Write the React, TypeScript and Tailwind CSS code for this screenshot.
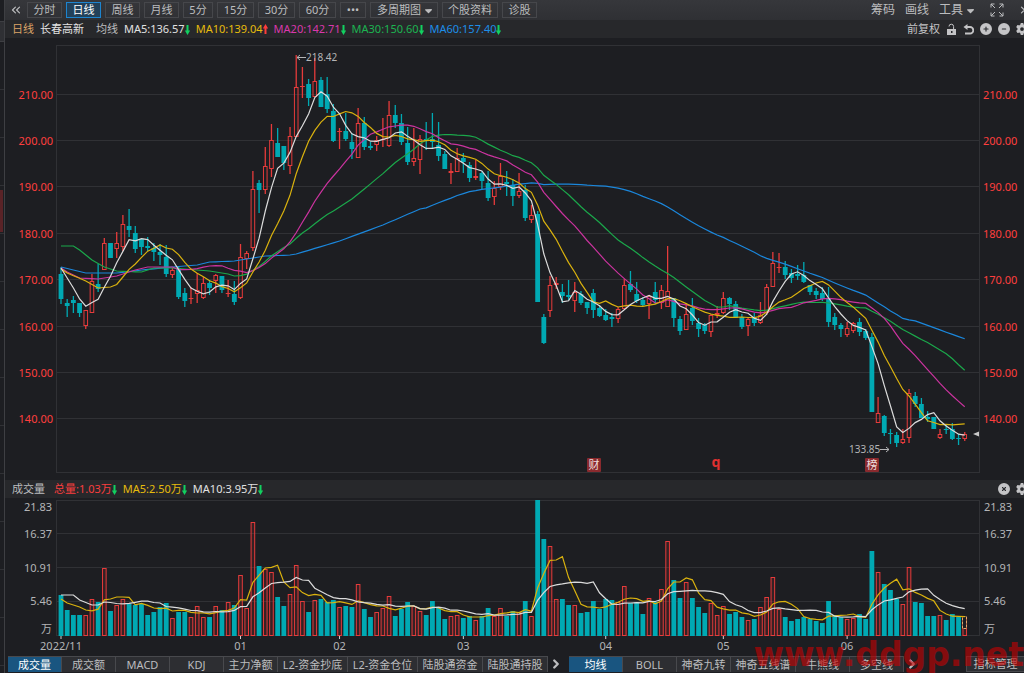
import { useState } from 'react';
import { ChevronRight, ChevronsLeft, ChevronsRight } from 'lucide-react';
import { FaCaretDown, FaCircleMinus, FaCirclePlus, FaCircleXmark, FaGear } from 'react-icons/fa6';

type Direction = 'u' | 'd';
// direction, high, low, body top, body bottom, volume top (chart units, y grows downwards)
type Candle = [Direction, number, number, number, number, number];
type Knot = [number, number];

const CANDLES: Candle[] = [
  ['d', 267, 304, 274, 299, 595],
  ['d', 299, 317, 303, 306, 610],
  ['d', 296, 313, 300, 303, 615],
  ['d', 303, 317, 303, 313, 615],
  ['u', 310, 329, 310, 326, 615],
  ['u', 274, 313, 281, 313, 599],
  ['d', 264, 292, 284, 289, 602],
  ['u', 238, 270, 243, 270, 568],
  ['d', 243, 258, 243, 258, 611],
  ['u', 232, 258, 243, 249, 605],
  ['u', 215, 251, 224, 247, 599],
  ['d', 209, 237, 226, 230, 604],
  ['d', 226, 253, 233, 249, 605],
  ['d', 239, 255, 239, 247, 604],
  ['d', 237, 251, 246, 248, 615],
  ['d', 243, 261, 248, 252, 612],
  ['d', 244, 265, 252, 255, 607],
  ['d', 245, 277, 257, 274, 603],
  ['u', 268, 278, 270, 275, 618],
  ['d', 266, 299, 268, 297, 612],
  ['d', 288, 307, 293, 301, 612],
  ['u', 287, 304, 298, 299, 617],
  ['u', 273, 303, 290, 294, 606],
  ['u', 277, 299, 283, 298, 617],
  ['d', 280, 295, 283, 288, 617],
  ['u', 274, 293, 275, 281, 606],
  ['d', 276, 293, 276, 290, 610],
  ['u', 280, 297, 293, 294, 602],
  ['d', 281, 305, 294, 302, 605],
  ['u', 244, 299, 257, 298, 575],
  ['u', 251, 269, 253, 259, 608],
  ['u', 171, 251, 189, 248, 522],
  ['d', 180, 213, 183, 190, 566],
  ['u', 147, 194, 166, 190, 569],
  ['u', 124, 177, 140, 169, 572],
  ['d', 128, 157, 143, 157, 597],
  ['d', 146, 170, 146, 163, 606],
  ['u', 127, 174, 136, 166, 594],
  ['u', 55, 137, 87, 137, 565],
  ['u', 67, 98, 86, 87, 601],
  ['d', 79, 106, 84, 98, 612],
  ['u', 58, 97, 81, 97, 600],
  ['d', 77, 107, 80, 107, 599],
  ['d', 77, 113, 94, 109, 602],
  ['d', 104, 142, 111, 141, 600],
  ['u', 128, 149, 131, 132, 607],
  ['d', 113, 141, 131, 139, 606],
  ['d', 133, 159, 142, 149, 607],
  ['u', 108, 158, 123, 158, 584],
  ['d', 117, 150, 123, 147, 609],
  ['d', 142, 150, 146, 148, 617],
  ['u', 136, 151, 140, 145, 612],
  ['u', 118, 147, 139, 140, 608],
  ['u', 101, 147, 115, 146, 596],
  ['d', 105, 128, 115, 123, 616],
  ['d', 114, 145, 123, 142, 609],
  ['d', 127, 165, 143, 162, 602],
  ['u', 128, 166, 158, 162, 606],
  ['u', 135, 174, 139, 160, 611],
  ['d', 122, 150, 139, 141, 615],
  ['d', 113, 149, 139, 142, 601],
  ['d', 122, 161, 145, 156, 607],
  ['d', 151, 169, 154, 169, 619],
  ['u', 163, 184, 171, 173, 616],
  ['u', 148, 172, 158, 172, 615],
  ['d', 153, 173, 158, 162, 618],
  ['d', 162, 182, 165, 178, 616],
  ['u', 160, 180, 176, 178, 620],
  ['d', 171, 189, 173, 181, 616],
  ['d', 171, 201, 183, 198, 608],
  ['u', 181, 205, 188, 197, 616],
  ['u', 163, 190, 176, 187, 608],
  ['d', 171, 196, 182, 184, 616],
  ['d', 179, 206, 185, 196, 611],
  ['u', 173, 198, 191, 196, 612],
  ['d', 185, 221, 190, 218, 601],
  ['u', 205, 223, 215, 220, 616],
  ['d', 211, 302, 214, 302, 500],
  ['d', 314, 344, 317, 343, 539],
  ['u', 276, 317, 285, 311, 546],
  ['u', 277, 289, 283, 285, 599],
  ['d', 284, 303, 292, 296, 599],
  ['d', 280, 300, 295, 297, 605],
  ['u', 282, 312, 292, 301, 605],
  ['d', 291, 305, 294, 303, 613],
  ['d', 302, 314, 302, 308, 612],
  ['d', 289, 318, 293, 310, 601],
  ['d', 305, 317, 308, 316, 609],
  ['d', 309, 321, 315, 320, 599],
  ['d', 313, 327, 317, 319, 600],
  ['u', 307, 323, 309, 319, 602],
  ['u', 279, 309, 285, 309, 586],
  ['d', 271, 292, 284, 290, 603],
  ['d', 282, 303, 294, 301, 602],
  ['d', 297, 306, 300, 305, 614],
  ['u', 295, 319, 296, 304, 598],
  ['d', 282, 304, 292, 300, 602],
  ['u', 285, 309, 290, 303, 589],
  ['u', 246, 307, 291, 307, 541],
  ['d', 298, 327, 298, 318, 580],
  ['d', 316, 335, 319, 331, 598],
  ['u', 303, 330, 314, 330, 582],
  ['d', 298, 325, 308, 321, 598],
  ['d', 318, 337, 323, 329, 607],
  ['d', 323, 334, 325, 331, 613],
  ['u', 314, 337, 315, 332, 603],
  ['u', 306, 318, 313, 315, 615],
  ['u', 292, 314, 298, 313, 606],
  ['d', 297, 310, 298, 304, 614],
  ['d', 301, 318, 304, 318, 612],
  ['d', 314, 329, 317, 327, 617],
  ['u', 317, 336, 319, 326, 620],
  ['d', 313, 326, 318, 323, 619],
  ['u', 302, 324, 315, 323, 607],
  ['u', 284, 315, 287, 313, 597],
  ['u', 252, 287, 263, 287, 577],
  ['u', 253, 273, 267, 268, 609],
  ['d', 261, 279, 267, 275, 617],
  ['d', 269, 283, 273, 278, 621],
  ['d', 265, 280, 274, 276, 619],
  ['d', 262, 283, 275, 282, 617],
  ['d', 285, 295, 285, 292, 619],
  ['d', 288, 299, 291, 295, 621],
  ['d', 287, 301, 293, 299, 623],
  ['d', 287, 327, 298, 322, 601],
  ['d', 313, 330, 317, 325, 615],
  ['d', 323, 337, 325, 329, 617],
  ['u', 322, 337, 328, 335, 619],
  ['u', 322, 333, 323, 331, 618],
  ['d', 318, 336, 322, 332, 614],
  ['d', 329, 340, 331, 338, 619],
  ['d', 333, 412, 337, 412, 551],
  ['u', 397, 423, 413, 423, 572],
  ['d', 415, 436, 416, 433, 584],
  ['d', 429, 444, 433, 434, 590],
  ['d', 432, 447, 435, 443, 599],
  ['u', 429, 444, 439, 443, 604],
  ['u', 389, 443, 393, 438, 567],
  ['d', 392, 407, 396, 404, 602],
  ['d', 398, 418, 404, 418, 603],
  ['d', 411, 422, 417, 419, 616],
  ['d', 417, 429, 417, 429, 616],
  ['u', 429, 439, 434, 438, 615],
  ['d', 425, 434, 429, 430, 620],
  ['d', 423, 440, 429, 439, 614],
  ['d', 434, 445, 438, 439, 617],
  ['u', 432, 441, 434, 439, 617],
];

const UP = '#e63b3b';
const DOWN = '#00a9b3';
const GRID = '#303135';
const WHITE = '#dcdcdc';
const YELLOW = '#dab20e';
const VOLUME_BASE = 635;

const closes = CANDLES.map(([dir, , , top, bottom]) => (dir === 'u' ? top : bottom));
const volumes = CANDLES.map((c) => c[5]);

const xAt = (i: number) => 61 + i * 6.19;

// The first values of an average depend on days before the window, so they come from knots.
function fromKnots(knots: Knot[], i: number) {
  const next = knots.findIndex(([k]) => k >= i);
  if (next <= 0) return knots[0][1];
  const [x0, y0] = knots[next - 1];
  const [x1, y1] = knots[next];
  return y0 + ((y1 - y0) * (i - x0)) / (x1 - x0);
}

function averageLine(values: number[], span: number, knots: Knot[]) {
  return values
    .map((_, i) => {
      const y =
        i < span - 1
          ? fromKnots(knots, i)
          : values.slice(i - span + 1, i + 1).reduce((a, b) => a + b, 0) / span;
      return `${xAt(i).toFixed(1)},${y.toFixed(1)}`;
    })
    .join(' ');
}

const PRICE_LINES = [
  {
    color: '#1b87dc',
    points: averageLine(closes, 60, [
      [0, 267], [2, 270], [4, 273], [9, 273], [13, 270], [18, 267], [22, 265], [24, 262], [28, 261],
      [31, 258], [33, 256], [37, 255], [38, 254], [45, 241], [52, 225], [58, 209], [59, 207],
    ]),
  },
  {
    color: '#1ba84b',
    points: averageLine(closes, 30, [
      [0, 246], [2, 246], [3, 250], [5, 260], [7, 267], [9, 271], [13, 272], [15, 268], [18, 268],
      [24, 271], [27, 274], [28, 276], [29, 275],
    ]),
  },
  {
    color: '#cb339f',
    points: averageLine(closes, 20, [
      [0, 268], [1, 272], [3, 278], [6, 279], [9, 276], [12, 270], [14, 267], [18, 267], [19, 268],
    ]),
  },
  {
    color: YELLOW,
    points: averageLine(closes, 10, [[0, 269], [1, 273], [4, 281], [6, 288], [8, 287], [9, 284]]),
  },
  { color: WHITE, points: averageLine(closes, 5, [[0, 268], [2, 288], [3, 299], [4, 306]]) },
];

const VOLUME_LINES = [
  { color: YELLOW, points: averageLine(volumes, 5, [[0, 599], [1, 603], [3, 607], [4, 610]]) },
  {
    color: WHITE,
    points: averageLine(volumes, 10, [[0, 595], [2, 595], [3, 600], [5, 605], [6, 605], [7, 602], [9, 603]]),
  },
];

const PRICE_TICKS = [
  { y: 95, label: '210.00' },
  { y: 141, label: '200.00' },
  { y: 187, label: '190.00' },
  { y: 234, label: '180.00' },
  { y: 280, label: '170.00' },
  { y: 327, label: '160.00' },
  { y: 373, label: '150.00' },
  { y: 419, label: '140.00' },
];

const VOLUME_TICKS = [
  { y: 507, label: '21.83' },
  { y: 534, label: '16.37' },
  { y: 568, label: '10.91' },
  { y: 601, label: '5.46' },
  { y: 629, label: '万' },
];

const MONTHS = [
  { index: 0, label: '2022/11' },
  { index: 29, label: '01' },
  { index: 45, label: '02' },
  { index: 65, label: '03' },
  { index: 88, label: '04' },
  { index: 107, label: '05' },
  { index: 127, label: '06' },
];

const PERIODS = [
  { label: '分时', width: 'w-[35px]' },
  { label: '日线', width: 'w-[35px]' },
  { label: '周线', width: 'w-[35px]' },
  { label: '月线', width: 'w-[35px]' },
  { label: '5分', width: 'w-[30px]' },
  { label: '15分', width: 'w-[37px]' },
  { label: '30分', width: 'w-[37px]' },
  { label: '60分', width: 'w-[37px]' },
  { label: '•••', width: 'w-[26px]' },
];

const AVERAGES = [
  { text: 'MA5:136.57', color: 'text-[#e2e2e2]', up: false },
  { text: 'MA10:139.04', color: 'text-[#e6bc0c]', up: true },
  { text: 'MA20:142.71', color: 'text-[#d938ac]', up: false },
  { text: 'MA30:150.60', color: 'text-[#1cb451]', up: false },
  { text: 'MA60:157.40', color: 'text-[#1d8ee8]', up: false },
];

const VOLUME_AVERAGES = [
  { text: '总量:1.03万', color: 'text-[#fa3e3e]', up: false },
  { text: 'MA5:2.50万', color: 'text-[#e6bc0c]', up: false },
  { text: 'MA10:3.95万', color: 'text-[#e2e2e2]', up: false },
];

const INDICATORS = [
  { label: '成交量', width: 'w-[54px]' },
  { label: '成交额', width: 'w-[54px]' },
  { label: 'MACD', width: 'w-[54px]' },
  { label: 'KDJ', width: 'w-[54px]' },
  { label: '主力净额', width: 'w-[54px]' },
  { label: 'L2-资金抄底', width: 'w-[70px]' },
  { label: 'L2-资金仓位', width: 'w-[70px]' },
  { label: '陆股通资金', width: 'w-[65px]' },
  { label: '陆股通持股', width: 'w-[65px]' },
];

const OVERLAYS = [
  { label: '均线', width: 'w-[54px]' },
  { label: 'BOLL', width: 'w-[54px]' },
  { label: '神奇九转', width: 'w-[54px]' },
  { label: '神奇五线谱', width: 'w-[65px]' },
  { label: '牛熊线', width: 'w-[54px]' },
  { label: '多空线', width: 'w-[54px]' },
];

const SIDE_ROWS = Array.from({ length: 13 }, (_, i) => i);

function Trend({ up }: { up: boolean }) {
  return (
    <svg viewBox="0 0 5 11" className="h-[11px] w-[5px] shrink-0">
      {up ? (
        <path d="M2.5 0 5.2 4.500H3.500V10H1.500V4.500H-0.200Z" fill="#ff3c3c" />
      ) : (
        <path d="M2.500 11 -0.200 6.500H1.500V1H3.500V6.500H5.200Z" fill="#12d060" />
      )}
    </svg>
  );
}

function Average({ text, color, up }: { text: string; color: string; up: boolean }) {
  return (
    <span className={`flex items-center ${color}`}>
      {text}
      <Trend up={up} />
    </span>
  );
}

function Candles() {
  return (
    <g>
      {CANDLES.map(([dir, high, low, top, bottom], i) => {
        const x = xAt(i);
        const color = dir === 'u' ? UP : DOWN;
        const hollow = dir === 'u' && bottom - top > 3;
        return (
          <g key={i}>
            <path d={`M${x} ${high}V${top}M${x} ${bottom}V${low}`} stroke={color} strokeWidth="1.3" />
            {hollow ? (
              <rect x={x - 1.8} y={top + 0.5} width="3.6" height={bottom - top - 1} fill="none" stroke={color} />
            ) : (
              <rect x={x - 2.4} y={top} width="4.8" height={Math.max(bottom - top, 1)} fill={color} />
            )}
          </g>
        );
      })}
    </g>
  );
}

function PriceChart() {
  return (
    <svg viewBox="5 38 1019 442" className="block w-full text-[11px]" role="img" aria-label="日线">
      <path d="M56.5 46V473M979.5 46V473M56 45.5H980M56 472.5H980" stroke={GRID} fill="none" />
      {PRICE_TICKS.map(({ y, label }) => (
        <g key={label} fill="#ff3e3e">
          <path d={`M57 ${y - 0.5}H979`} stroke={GRID} />
          <text x="53" y={y + 4} textAnchor="end">{label}</text>
          <text x="983" y={y + 4}>{label}</text>
        </g>
      ))}
      <Candles />
      {PRICE_LINES.map(({ color, points }) => (
        <polyline key={color} points={points} fill="none" stroke={color} strokeWidth="1.2" />
      ))}
      <g fill="#b4b5b7" className="text-[10px]">
        <path d="M297 57.5H306M300 55 297 57.5 300 60" stroke="#b4b5b7" fill="none" />
        <text x="306" y="61">218.42</text>
        <text x="849" y="453">133.85</text>
        <path d="M880 449.5H889M886 447 889 449.5 886 452" stroke="#b4b5b7" fill="none" />
        <path d="M973 434 979 431.500V436.500Z" fill="#c9c9c9" />
      </g>
      <g textAnchor="middle" fill="#f1dede">
        <rect x="587" y="458" width="14" height="14" rx="1" fill="#8a2a2e" />
        <text x="594" y="469">财</text>
        <rect x="865" y="458" width="14" height="14" rx="1" fill="#8a2a2e" />
        <text x="872" y="469">榜</text>
        <text x="716" y="467" className="text-[14px] font-bold" fill="#e03030">q</text>
      </g>
    </svg>
  );
}

function VolumeChart() {
  return (
    <svg viewBox="5 498 1019 157" className="block w-full text-[11px]" role="img" aria-label="成交量">
      <path
        d="M56.5 500V636M979.5 500V636M56 500.5H980M56 533.5H980M56 567.5H980M56 601.5H980M56 635.5H980"
        stroke={GRID}
        fill="none"
      />
      {VOLUME_TICKS.map(({ y, label }) => (
        <g key={label} fill="#b4b5b7">
          <text x="52" y={y + 4} textAnchor="end">{label}</text>
          <text x="984" y={y + 4}>{label}</text>
        </g>
      ))}
      {CANDLES.map(([dir, , , , , top], i) =>
        dir === 'u' ? (
          <rect
            key={i}
            x={xAt(i) - 1.8}
            y={top + 0.5}
            width="3.6"
            height={VOLUME_BASE - top}
            fill="#e63b3b"
            fillOpacity="0.12"
            stroke={UP}
          />
        ) : (
          <rect key={i} x={xAt(i) - 2.4} y={top} width="4.8" height={VOLUME_BASE + 1 - top} fill={DOWN} />
        ),
      )}
      <rect x="962.500" y="616.500" width="4" height="12" fill="#1d1e22" stroke="#e3a96a" strokeDasharray="3 1" />
      {VOLUME_LINES.map(({ color, points }) => (
        <polyline key={color} points={points} fill="none" stroke={color} strokeWidth="1.2" />
      ))}
      {MONTHS.map(({ index, label }) => (
        <g key={label} fill="#b4b5b7">
          <path d={`M${xAt(index)} 636V639`} stroke="#d0d0d0" />
          <text x={xAt(index)} y="650" textAnchor="middle">{label}</text>
        </g>
      ))}
    </svg>
  );
}

function Toolbar() {
  const [period, setPeriod] = useState('日线');

  return (
    <header className="flex h-5 items-center gap-1 overflow-hidden bg-linear-to-b from-[#36373b] to-[#2f3034] pl-1">
      <button aria-label="收起" className="w-[14px]">
        <ChevronsLeft size={14} strokeWidth={2} />
      </button>
      {PERIODS.map(({ label, width }) => (
        <button
          key={label}
          onClick={() => setPeriod(label)}
          className={`h-4 shrink-0 border leading-[14px] ${width} ${
            label === period ? 'border-[#1d84cf] bg-[#22415a] text-white' : 'border-[#46474b]'
          }`}
        >
          {label}
        </button>
      ))}
      <label className="flex h-4 w-[68px] shrink-0 items-center border border-[#46474b] pl-[6px]">
        <select aria-label="多周期图" className="w-[46px] appearance-none bg-transparent leading-[14px]">
          <option>多周期图</option>
        </select>
        <FaCaretDown size={11} />
      </label>
      <button className="h-4 w-[56px] shrink-0 border border-[#46474b] leading-[14px]">个股资料</button>
      <button className="h-4 w-[35px] shrink-0 border border-[#46474b] leading-[14px]">诊股</button>
      <div className="ml-auto flex shrink-0 items-center gap-[10px] text-[12px]">
        <button>筹码</button>
        <button>画线</button>
        <label className="flex items-center">
          <select aria-label="工具" className="w-[26px] appearance-none bg-transparent">
            <option>工具</option>
          </select>
          <FaCaretDown size={11} />
        </label>
        <button aria-label="全屏" className="ml-1">
          <svg viewBox="0 0 14 14" className="size-[14px]" fill="none" stroke="currentColor">
            <path d="M1 4.500V1H4.500M9.500 1H13V4.500M13 9.500V13H9.500M4.500 13H1V9.500" />
            <path d="M1 1 5 5M13 1 9 5M13 13 9 9M1 13 5 9" />
          </svg>
        </button>
        <button aria-label="展开" className="-mr-2 ml-1">
          <ChevronsRight size={14} strokeWidth={2} />
        </button>
      </div>
    </header>
  );
}

function PriceHeader() {
  return (
    <div className="flex h-[18px] items-center gap-[6px] overflow-hidden whitespace-nowrap bg-[#27282b] pl-[7px]">
      <span className="text-[#dba468]">日线</span>
      <h1 className="mr-[6px] text-[#e2e2e2]">长春高新</h1>
      <span>均线</span>
      {AVERAGES.map((average) => (
        <Average key={average.text} {...average} />
      ))}
      <div className="-mr-1 ml-auto flex shrink-0 items-center gap-[6px] text-[#c4c4c6]">
        <button>前复权</button>
        <button aria-label="锁定">
          <svg viewBox="0 0 11 12" className="h-3 w-[11px]">
            <path d="M3 3.500A2.300 2.300 0 0 1 7.600 3.500V6" fill="none" stroke="currentColor" />
            <path d="M1 6H10V12H1ZM5 8V10H6.500V8Z" fill="currentColor" fillRule="evenodd" />
          </svg>
        </button>
        <button aria-label="撤销">
          <svg viewBox="0 0 11 11" className="size-[11px]">
            <path d="M2 3H7A3.200 3.200 0 0 1 7 9.500H2" fill="none" stroke="currentColor" strokeWidth="1.800" />
            <path d="M4.500 0V6L0.500 3Z" fill="currentColor" />
          </svg>
        </button>
        <button aria-label="放大"><FaCirclePlus size={12} /></button>
        <button aria-label="缩小"><FaCircleMinus size={12} /></button>
        <button aria-label="设置"><FaGear size={12} /></button>
      </div>
    </div>
  );
}

function VolumeHeader() {
  return (
    <div className="flex h-[18px] items-center gap-[6px] overflow-hidden whitespace-nowrap bg-[#27282b] pl-[7px]">
      <h2 className="mr-[3px]">成交量</h2>
      {VOLUME_AVERAGES.map((average) => (
        <Average key={average.text} {...average} />
      ))}
      <div className="-mr-1 ml-auto flex shrink-0 items-center gap-[6px] text-[#c4c4c6]">
        <button aria-label="关闭"><FaCircleXmark size={12} /></button>
        <button aria-label="设置"><FaGear size={12} /></button>
      </div>
    </div>
  );
}

function Tabs({ items, initial }: { items: { label: string; width: string }[]; initial: string }) {
  const [active, setActive] = useState(initial);

  return (
    <div className="flex shrink-0 items-center">
      {items.map(({ label, width }) => (
        <button
          key={label}
          onClick={() => setActive(label)}
          className={`h-4 shrink-0 whitespace-nowrap border-r border-t border-[#48494d] leading-[15px] ${width} ${
            label === active ? 'bg-[#195580] text-white' : 'bg-[#2d2e32]'
          }`}
        >
          {label}
        </button>
      ))}
      <button aria-label="更多" className="ml-px">
        <ChevronRight size={14} strokeWidth={4} />
      </button>
    </div>
  );
}

export default function App() {
  return (
    <div className="relative flex min-h-screen overflow-hidden bg-[#1d1e22] font-['Noto_Sans','Noto_Sans_CJK_SC',sans-serif] text-[11px] leading-4 text-[#bcbdbf]">
      <aside className="w-[5px] shrink-0 overflow-hidden border-r border-[#3e3f43]">
        <div className="h-[22px] border-b border-[#3e3f43]" />
        <div className="h-[20px] border-b border-[#3e3f43] bg-[#2f3034]" />
        {SIDE_ROWS.map((row) => (
          <div key={row} className="h-12 border-b border-[#303135] pt-[4px]">
            {row === 3 && <div className="h-[42px] w-[3px] bg-[#5a2327]" />}
          </div>
        ))}
      </aside>
      <main className="min-w-0 flex-1">
        <Toolbar />
        <PriceHeader />
        <PriceChart />
        <VolumeHeader />
        <VolumeChart />
        <footer className="flex items-center overflow-hidden pl-[3px] pt-px">
          <Tabs items={INDICATORS} initial="成交量" />
          <div className="ml-[6px]">
            <Tabs items={OVERLAYS} initial="均线" />
          </div>
          <button className="ml-auto h-4 w-[58px] shrink-0 border border-r-0 border-[#48494d] bg-[#2d2e32] leading-[14px]">
            指标管理
          </button>
        </footer>
      </main>
      <div className="pointer-events-none absolute bottom-0 right-0 font-['DejaVu_Sans',sans-serif] text-[33px] font-bold leading-9 text-[#c80000]/60">
        www.ddgp.net
      </div>
    </div>
  );
}
